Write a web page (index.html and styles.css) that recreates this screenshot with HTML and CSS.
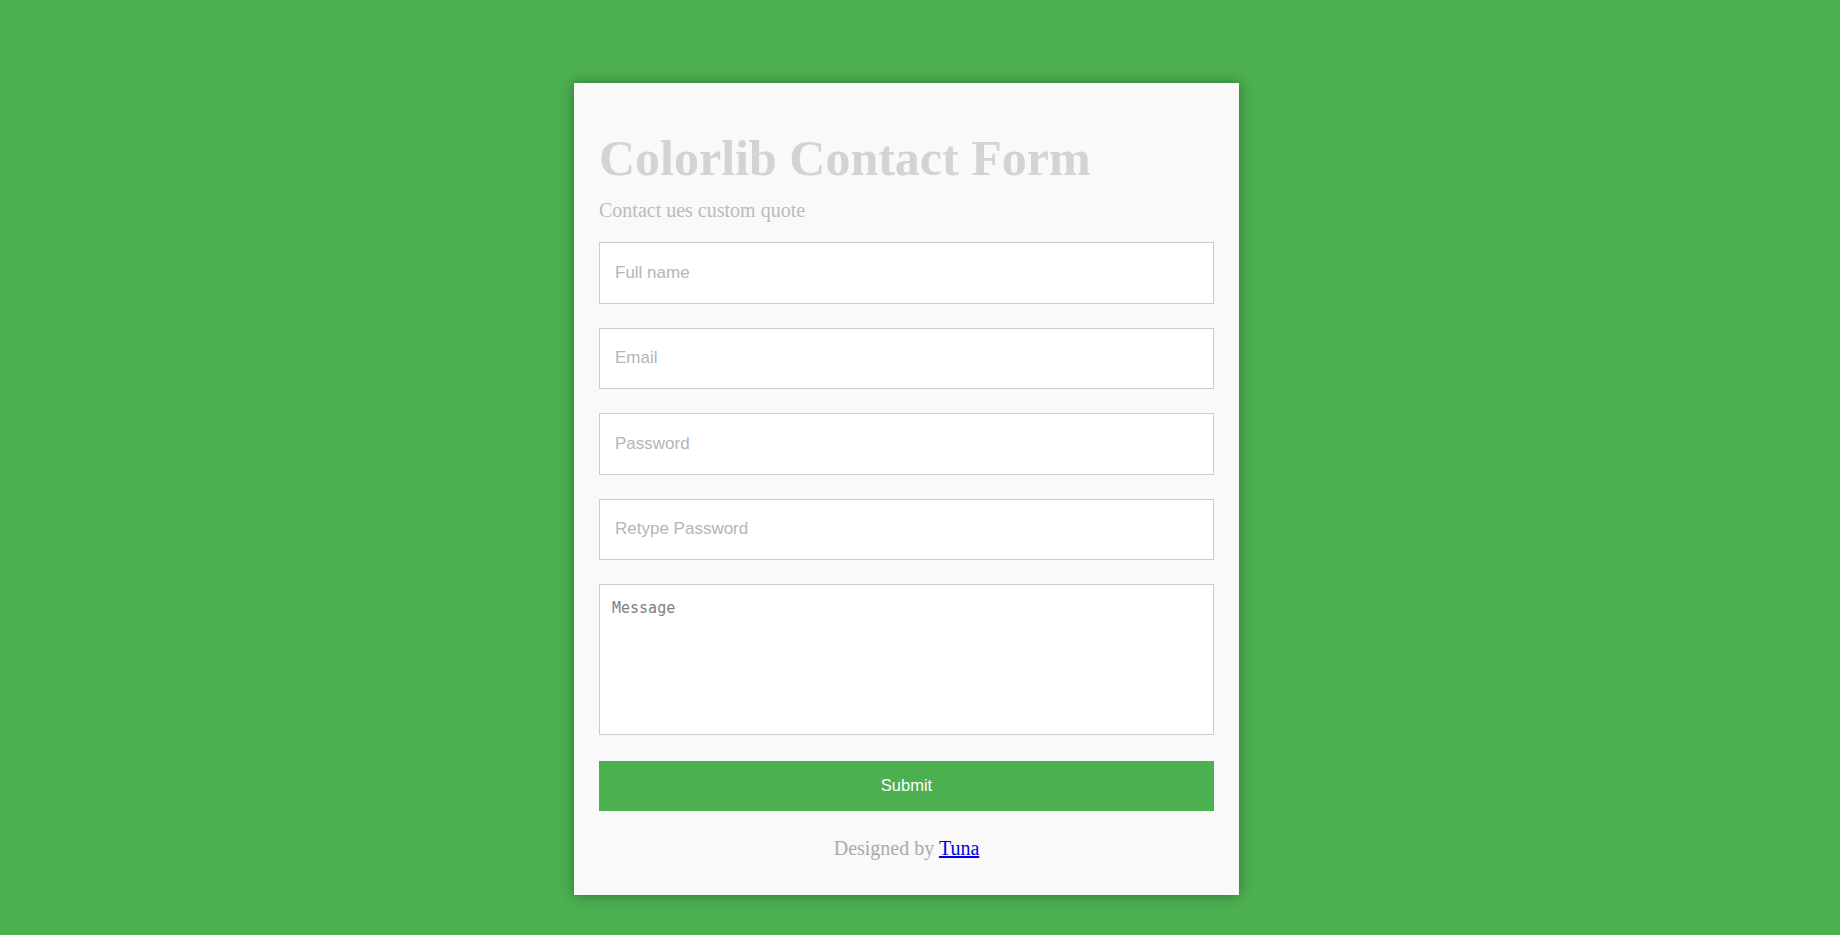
FILE: index.html
```html
<!DOCTYPE html>
<html lang="en">
<head>
<meta charset="utf-8">
<title>Colorlib Contact Form</title>
<link rel="stylesheet" href="styles.css">
</head>
<body>
<div class="page">
  <div class="card">
    <h1 class="title">Colorlib Contact Form</h1>
    <p class="subtitle">Contact ues custom quote</p>
    <form class="form">
      <input class="field" type="text" placeholder="Full name">
      <input class="field" type="email" placeholder="Email">
      <input class="field" type="password" placeholder="Password">
      <input class="field" type="password" placeholder="Retype Password">
      <textarea class="message" placeholder="Message"></textarea>
      <button class="submit" type="button">Submit</button>
    </form>
    <p class="credit">Designed by <a class="credit-link" href="#">Tuna</a></p>
  </div>
</div>
</body>
</html>
```
FILE: styles.css
```css
html, body {
  margin: 0;
  padding: 0;
}
body {
  background: #4caf50;
  min-height: 935px;
  font-family: "Liberation Serif", "Times New Roman", serif;
}
.page {
  display: flex;
  justify-content: center;
  align-items: flex-start;
  padding: 83px 27px 40px 0;
}
.card {
  width: 665px;
  box-sizing: border-box;
  padding: 47px 25px 35px;
  background: #f9f9f9;
  box-shadow: 0 0 12px rgba(0, 0, 0, 0.35);
}
.title {
  margin: 0;
  font-family: "Liberation Serif", "Times New Roman", serif;
  font-size: 50px;
  font-weight: bold;
  line-height: 56px;
  color: #d3d3d3;
}
.subtitle {
  margin: 12px 0 0;
  font-size: 20px;
  line-height: 24px;
  color: #bbbbbb;
}
.form {
  display: flex;
  flex-direction: column;
  gap: 24px;
  margin-top: 20px;
}
.field {
  display: block;
  width: 100%;
  box-sizing: border-box;
  margin: 0;
  padding: 20px 15px;
  border: 1px solid #cccccc;
  border-radius: 0;
  background: #ffffff;
  font-family: "Liberation Sans", Arial, sans-serif;
  font-size: 17px;
  line-height: 19.5px;
  height: 61.5px;
  color: #555555;
  outline: none;
}
.field::placeholder {
  color: #b5b5b5;
}
.message {
  display: block;
  width: 100%;
  height: 151px;
  box-sizing: border-box;
  margin: 0;
  padding: 10px 12px;
  border: 1px solid #cccccc;
  border-radius: 0;
  background: #ffffff;
  font-family: "DejaVu Sans Mono", monospace;
  font-size: 15px;
  line-height: 27px;
  resize: none;
  outline: none;
}
.message::placeholder {
  color: #808080;
}
.submit {
  display: block;
  width: 100%;
  height: 50px;
  margin: 2px 0 0;
  padding: 0 0 2px;
  border: none;
  border-radius: 0;
  background: #4caf50;
  color: #ffffff;
  font-family: "Liberation Sans", Arial, sans-serif;
  font-size: 16.5px;
  cursor: pointer;
}
.credit {
  margin: 25px 0 0;
  text-align: center;
  font-size: 20px;
  line-height: 24px;
  color: #aaaaaa;
}
.credit-link {
  color: #0000ee;
  text-decoration: underline;
}
```
